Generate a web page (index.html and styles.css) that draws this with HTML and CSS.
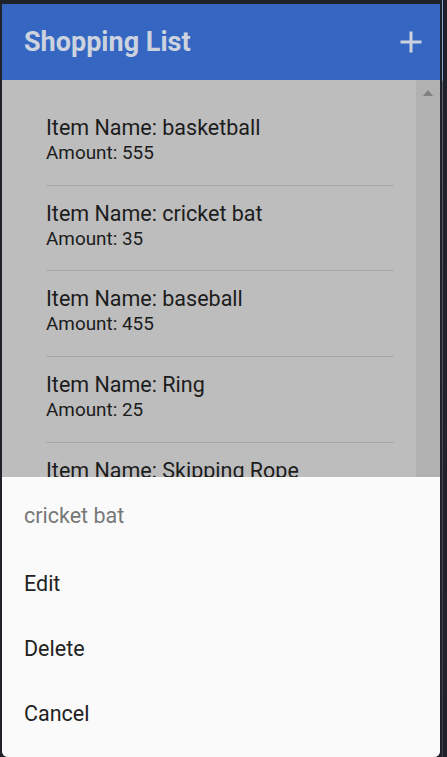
FILE: index.html
```html
<!DOCTYPE html>
<html>
<head>
<meta charset="utf-8">
<link rel="stylesheet" href="styles.css">
</head>
<body>
<div class="frame">
  <div class="app">
    <header class="bar">
      <h1 class="title">Shopping List</h1>
      <svg class="plus" width="24" height="24" viewBox="0 0 24 24"><path d="M12 1.5V22.5M1.5 12H22.5" stroke="#ccd3de" stroke-width="3" fill="none"/></svg>
    </header>
    <div class="content">
      <ul class="list">
        <li class="item"><div class="name">Item Name: basketball</div><div class="amount">Amount: 555</div></li>
        <li class="item"><div class="name">Item Name: cricket bat</div><div class="amount">Amount: 35</div></li>
        <li class="item"><div class="name">Item Name: baseball</div><div class="amount">Amount: 455</div></li>
        <li class="item"><div class="name">Item Name: Ring</div><div class="amount">Amount: 25</div></li>
        <li class="item"><div class="name">Item Name: Skipping Rope</div></li>
      </ul>
      <div class="scrollbar"><span class="arrow"></span></div>
    </div>
    <div class="sheet">
      <div class="sheet-title">cricket bat</div>
      <div class="sheet-row">Edit</div>
      <div class="sheet-row">Delete</div>
      <div class="sheet-row">Cancel</div>
    </div>
  </div>
  <div class="edge"></div>
</div>
</body>
</html>
```
FILE: styles.css
```css
html, body {
  margin: 0;
  padding: 0;
  background: #1f2228;
  width: 447px;
  height: 757px;
  overflow: hidden;
  font-family: Roboto, "Liberation Sans", sans-serif;
}
.frame {
  display: flex;
  height: 757px;
  padding: 4px 0 0 2px;
  box-sizing: border-box;
}
.app {
  position: relative;
  width: 438px;
  height: 753px;
  display: flex;
  flex-direction: column;
  background: #bdbdbd;
  border-bottom-left-radius: 6px;
  border-bottom-right-radius: 6px;
  overflow: hidden;
}
.edge {
  width: 1px;
  margin-left: 2px;
  margin-top: -4px;
  height: 757px;
  background: linear-gradient(#8ea6d6 0, #8ea6d6 80px, #5a5f68 82px, #3a3e46 100%);
}
.bar {
  height: 76px;
  background: #3567c2;
  display: flex;
  align-items: center;
  justify-content: space-between;
  padding: 0 17px 0 22px;
  flex-shrink: 0;
}
.title {
  margin: 0;
  font-size: 27px;
  font-weight: 700;
  color: #ccd3de;
  letter-spacing: 0;
}
.plus {
  display: block;
}
.content {
  flex: 1;
  display: flex;
  min-height: 0;
}
.list {
  list-style: none;
  margin: 0;
  padding: 20px 0 0 44px;
  flex: 1;
}
.item {
  width: 348px;
  padding: 14px 0 19.7px;
  border-bottom: 1px solid #a6a6a6;
  color: #1c1c1c;
}
.item:last-child {
  border-bottom: none;
}
.name {
  font-size: 21.5px;
  line-height: 27px;
}
.amount {
  font-size: 18.9px;
  line-height: 24px;
}
.scrollbar {
  width: 24px;
  background: #b1b1b1;
  display: flex;
  justify-content: center;
  padding-top: 10px;
  box-sizing: border-box;
}
.arrow {
  width: 0;
  height: 0;
  border-left: 5px solid transparent;
  border-right: 5px solid transparent;
  border-bottom: 6px solid #808080;
}
.sheet {
  position: absolute;
  left: 0;
  right: 0;
  top: 473px;
  bottom: 0;
  background: #fafafa;
  padding: 19px 0 0 22px;
}
.sheet-title {
  font-size: 21.5px;
  line-height: 40px;
  margin-bottom: 15px;
  color: #787878;
}
.sheet-row {
  font-size: 21.5px;
  line-height: 65px;
  color: #222222;
}
```
